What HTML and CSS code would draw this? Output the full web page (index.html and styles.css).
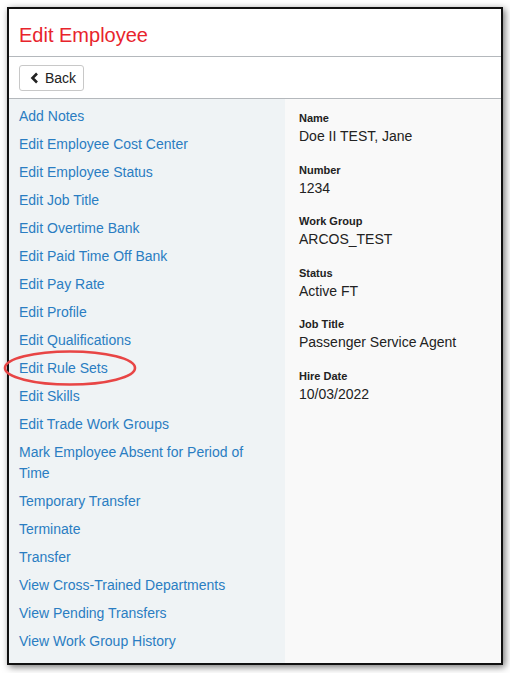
FILE: index.html
```html
<!DOCTYPE html>
<html>
<head>
<meta charset="utf-8">
<link rel="stylesheet" href="styles.css">
</head>
<body>
<div class="frame">
  <div class="header"><h1 class="title">Edit Employee</h1></div>
  <div class="toolbar">
    <button class="back-btn"><svg class="chev" width="9" height="12" viewBox="0 0 9 12"><path d="M7 1.5 L2.5 6 L7 10.5" fill="none" stroke="#222" stroke-width="2.6" stroke-linejoin="miter"/></svg>Back</button>
  </div>
  <div class="content">
    <ul class="menu">
      <li><a>Add Notes</a></li>
      <li><a>Edit Employee Cost Center</a></li>
      <li><a>Edit Employee Status</a></li>
      <li><a>Edit Job Title</a></li>
      <li><a>Edit Overtime Bank</a></li>
      <li><a>Edit Paid Time Off Bank</a></li>
      <li><a>Edit Pay Rate</a></li>
      <li><a>Edit Profile</a></li>
      <li><a>Edit Qualifications</a></li>
      <li><a>Edit Rule Sets</a></li>
      <li><a>Edit Skills</a></li>
      <li><a>Edit Trade Work Groups</a></li>
      <li><a>Mark Employee Absent for Period of Time</a></li>
      <li><a>Temporary Transfer</a></li>
      <li><a>Terminate</a></li>
      <li><a>Transfer</a></li>
      <li><a>View Cross-Trained Departments</a></li>
      <li><a>View Pending Transfers</a></li>
      <li><a>View Work Group History</a></li>
    </ul>
    <div class="details">
      <div class="field"><div class="label">Name</div><div class="value">Doe II TEST, Jane</div></div>
      <div class="field"><div class="label">Number</div><div class="value">1234</div></div>
      <div class="field"><div class="label">Work Group</div><div class="value">ARCOS_TEST</div></div>
      <div class="field"><div class="label">Status</div><div class="value">Active FT</div></div>
      <div class="field"><div class="label">Job Title</div><div class="value">Passenger Service Agent</div></div>
      <div class="field"><div class="label">Hire Date</div><div class="value">10/03/2022</div></div>
    </div>
  </div>
</div>
<svg class="annotation" width="150" height="50" viewBox="0 0 150 50"><ellipse cx="70" cy="20" rx="65" ry="16.5" fill="none" stroke="#e84545" stroke-width="2.6"/></svg>
</body>
</html>
```

FILE: styles.css
```css
html, body {
  margin: 0;
  padding: 0;
  background: #ffffff;
}
body {
  font-family: "Liberation Sans", Arial, sans-serif;
  position: relative;
  width: 510px;
  height: 673px;
  overflow: hidden;
}
.frame {
  box-sizing: border-box;
  margin: 7px 0 0 7px;
  width: 496px;
  height: 658px;
  border: 2px solid #111;
  background: #fff;
  box-shadow: 2px 2px 7px rgba(0,0,0,0.55);
  display: flex;
  flex-direction: column;
}
.header {
  height: 47px;
  border-bottom: 1px solid #b4b8bc;
  display: flex;
  align-items: center;
  padding: 0 10px;
}
.title {
  margin: 0;
  font-weight: normal;
  font-size: 20px;
  color: #e8242c;
  line-height: 24px;
  padding-top: 5px;
}
.toolbar {
  height: 41px;
  border-bottom: 1px solid #b4b8bc;
  display: flex;
  align-items: center;
  padding: 0 10px;
}
.back-btn {
  box-sizing: border-box;
  height: 26px;
  width: 65px;
  border: 1px solid #c8c8c8;
  border-radius: 3px;
  background: #fff;
  font-family: "Liberation Sans", Arial, sans-serif;
  font-size: 14px;
  color: #222;
  display: flex;
  align-items: center;
  padding: 0 0 0 10px;
  gap: 6px;
  margin-top: 1px;
}
.chev { display: block; }
.content {
  flex: 1;
  display: flex;
  min-height: 0;
}
.menu {
  list-style: none;
  margin: 0;
  padding: 3px 0 0 0;
  width: 276px;
  background: #eff3f5;
}
.menu li {
  padding: 3.5px 30px 3.5px 10px;
  font-size: 14px;
  line-height: 21px;
}
.menu a {
  color: #2a7dc2;
  text-decoration: none;
}
.details {
  flex: 1;
  background: #f9f9f9;
  padding: 11px 14px 0 14px;
}
.field {
  margin-bottom: 15.6px;
}
.label {
  font-size: 11px;
  font-weight: bold;
  line-height: 16px;
  color: #222;
}
.value {
  font-size: 14px;
  line-height: 20px;
  color: #222;
}
.annotation {
  position: absolute;
  left: 0;
  top: 348px;
}
```
